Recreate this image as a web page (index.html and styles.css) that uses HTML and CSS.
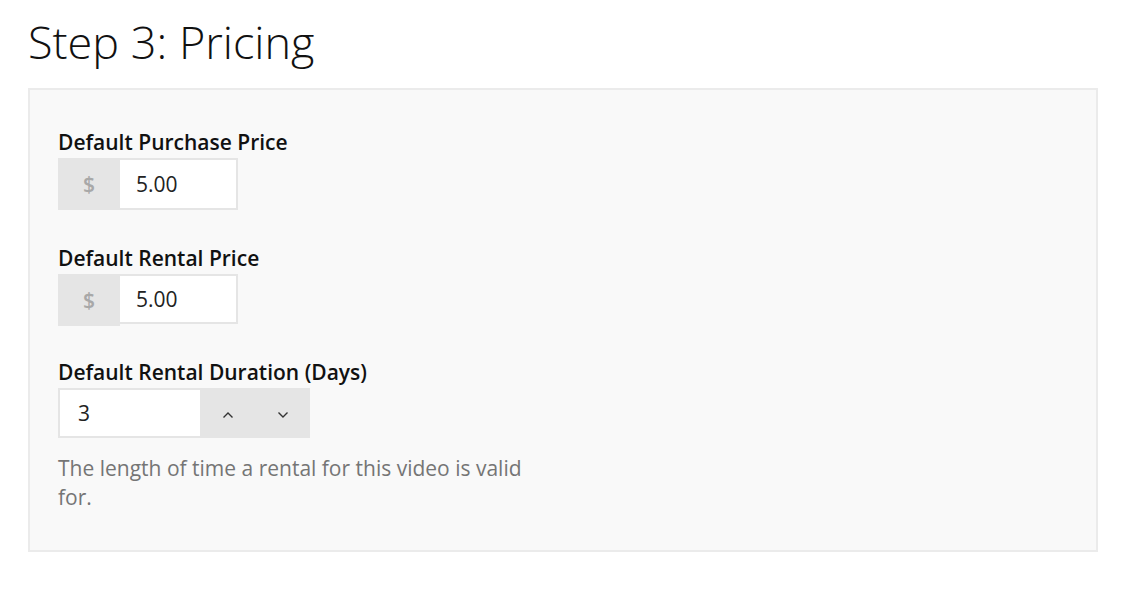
FILE: index.html
```html
<!doctype html>
<html lang="en">
  <head>
    <meta charset="UTF-8" />
    <title>Step 3: Pricing</title>
    <link rel="stylesheet" href="styles.css">
  </head>
  <body>
    <h1 class="step-title">Step 3: Pricing</h1>
    <div class="panel">
      <div class="field">
        <label for="purchase">Default Purchase Price</label>
        <div class="input-group">
          <span class="addon">$</span>
          <input type="text" id="purchase" value="5.00" />
        </div>
      </div>

      <div class="field">
        <label for="rental">Default Rental Price</label>
        <div class="input-group">
          <span class="addon">$</span>
          <input type="text" id="rental" value="5.00" class="short" />
        </div>
      </div>

      <div class="field field-last">
        <label for="duration">Default Rental Duration (Days)</label>
        <div class="number-group">
          <input type="text" id="duration" value="3" />
          <div class="spinner">
            <span class="spin">
              <svg width="12" height="8" viewBox="0 0 12 8"><path d="M1.5 6.5 6 2l4.5 4.5" fill="none" stroke="#333" stroke-width="1.4"/></svg>
            </span>
            <span class="spin">
              <svg width="12" height="8" viewBox="0 0 12 8"><path d="M1.5 1.5 6 6l4.5-4.5" fill="none" stroke="#333" stroke-width="1.4"/></svg>
            </span>
          </div>
        </div>
        <p class="help">The length of time a rental for this video is valid for.</p>
      </div>
    </div>
  </body>
</html>
```

FILE: styles.css
```css
body {
  margin: 0;
  padding: 0 24px 0 28px;
  font-family: "Open Sans", sans-serif;
  background-color: #fff;
  color: #111;
}

.step-title {
  margin: 0;
  padding-top: 10px;
  height: 88px;
  font-size: 45px;
  font-weight: 300;
  line-height: 64px;
  box-sizing: border-box;
}

.panel {
  background-color: #f9f9f9;
  border: 2px solid #ebebeb;
  padding: 37px 28px 38px;
  width: 1070px;
  box-sizing: border-box;
}

.field {
  margin-bottom: 33px;
}

.field:nth-child(2) {
  margin-bottom: 31px;
}

.field-last {
  margin-bottom: 0;
}

label {
  display: block;
  font-size: 21px;
  font-weight: 600;
  line-height: 31px;
}

.input-group {
  display: flex;
  align-items: flex-start;
}

.addon {
  width: 62px;
  height: 52px;
  background-color: #e5e5e5;
  color: #a8a8a8;
  font-size: 21px;
  font-weight: 600;
  display: flex;
  align-items: center;
  justify-content: center;
}

input {
  font-family: "Open Sans", sans-serif;
  font-size: 21px;
  color: #222;
  background-color: #fff;
  border: 2px solid #e5e5e5;
  border-left: none;
  margin: 0;
  outline: none;
  box-sizing: border-box;
}

.input-group input {
  width: 118px;
  height: 52px;
  padding: 0 0 0 16px;
}

.input-group input.short {
  height: 50px;
}

.number-group {
  display: flex;
  height: 50px;
}

.number-group input {
  width: 142px;
  flex-shrink: 0;
  height: 50px;
  border-left: 2px solid #e5e5e5;
  border-right: none;
  padding: 0 0 0 18px;
}

.spinner {
  width: 110px;
  display: flex;
  background-color: #e5e5e5;
}

.spin {
  flex: 1;
  display: flex;
  align-items: center;
  justify-content: center;
  padding-top: 4px;
}

.help {
  margin: 16px 0 0;
  max-width: 485px;
  font-size: 21px;
  line-height: 29px;
  color: #757575;
}
```
